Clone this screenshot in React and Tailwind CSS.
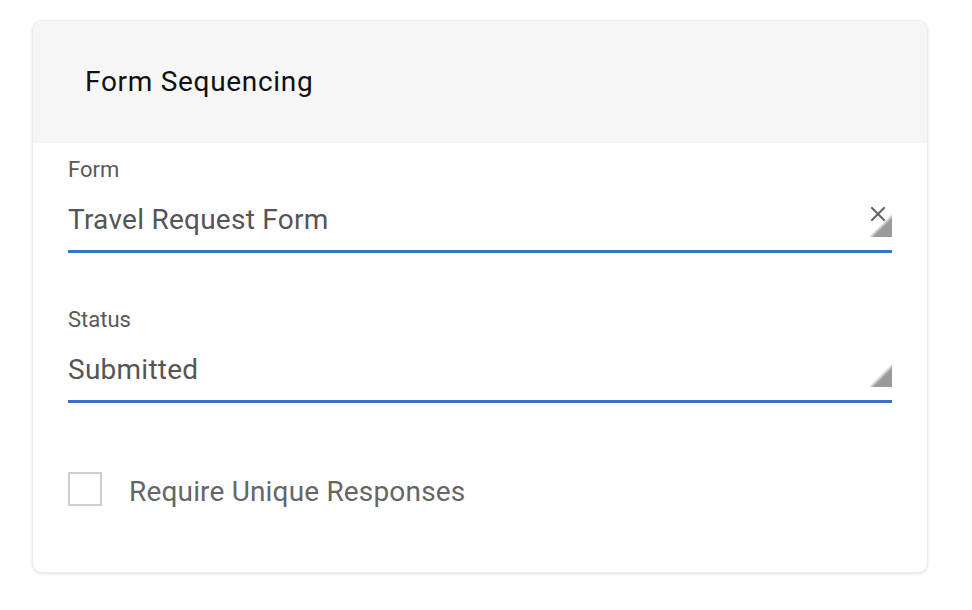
import React from "react";

function Corner() {
  return (
    <svg width="24" height="24" viewBox="0 0 24 24" className="block">
      <defs>
        <linearGradient id="cornerFade" x1="0" y1="0" x2="24" y2="24" gradientUnits="userSpaceOnUse">
          <stop offset="0.5" stopColor="#9a9a9a" stopOpacity="0" />
          <stop offset="0.62" stopColor="#9a9a9a" stopOpacity="1" />
          <stop offset="1" stopColor="#9a9a9a" stopOpacity="1" />
        </linearGradient>
      </defs>
      <polygon points="24,0 24,24 0,24" fill="url(#cornerFade)" />
    </svg>
  );
}

function ClearX() {
  return (
    <svg width="16" height="16" viewBox="0 0 16 16" className="block">
      <path d="M2 2 L14 14 M14 2 L2 14" stroke="#636363" strokeWidth="2" strokeLinecap="square" />
    </svg>
  );
}

function Field({ label, value, clearable }) {
  return (
    <div>
      <div className="text-[22px] leading-[26px] text-[#595959]">{label}</div>
      <div className="mt-[21px] pb-[14px] border-b-[3px] border-[#3871c6] flex items-end justify-between">
        <span className="text-[28px] leading-[32px] tracking-[0.25px] text-[#555555]">{value}</span>
        <div className="relative mb-[-1px]">
          {clearable && (
            <div className="absolute left-[2px] top-[-7px]">
              <ClearX />
            </div>
          )}
          <Corner />
        </div>
      </div>
    </div>
  );
}

export default function App() {
  return (
    <div className="min-h-screen bg-white pt-[20px] pl-[32px]" style={{ fontFamily: "Roboto, 'Liberation Sans', sans-serif" }}>
      <div className="w-[896px] rounded-[10px] overflow-hidden border border-[#ececec] shadow-[0_1px_3px_rgba(0,0,0,0.12)] bg-white">
        <div className="h-[122px] bg-[#f6f6f6] flex items-center pl-[52px]">
          <h1 className="text-[28px] tracking-[0.7px] text-[#111111]">Form Sequencing</h1>
        </div>
        <div className="px-[35px] pt-[14px] pb-[64px]">
          <Field label="Form" value="Travel Request Form" clearable />
          <div className="mt-[54px]">
            <Field label="Status" value="Submitted" />
          </div>
          <label className="mt-[69px] flex items-start gap-[27px]">
            <span className="w-[34px] h-[34px] border-2 border-[#cfcfcf] bg-white shrink-0" />
            <span className="mt-[4px] text-[28px] leading-[32px] tracking-[0.17px] text-[#666666]">Require Unique Responses</span>
          </label>
        </div>
      </div>
    </div>
  );
}
